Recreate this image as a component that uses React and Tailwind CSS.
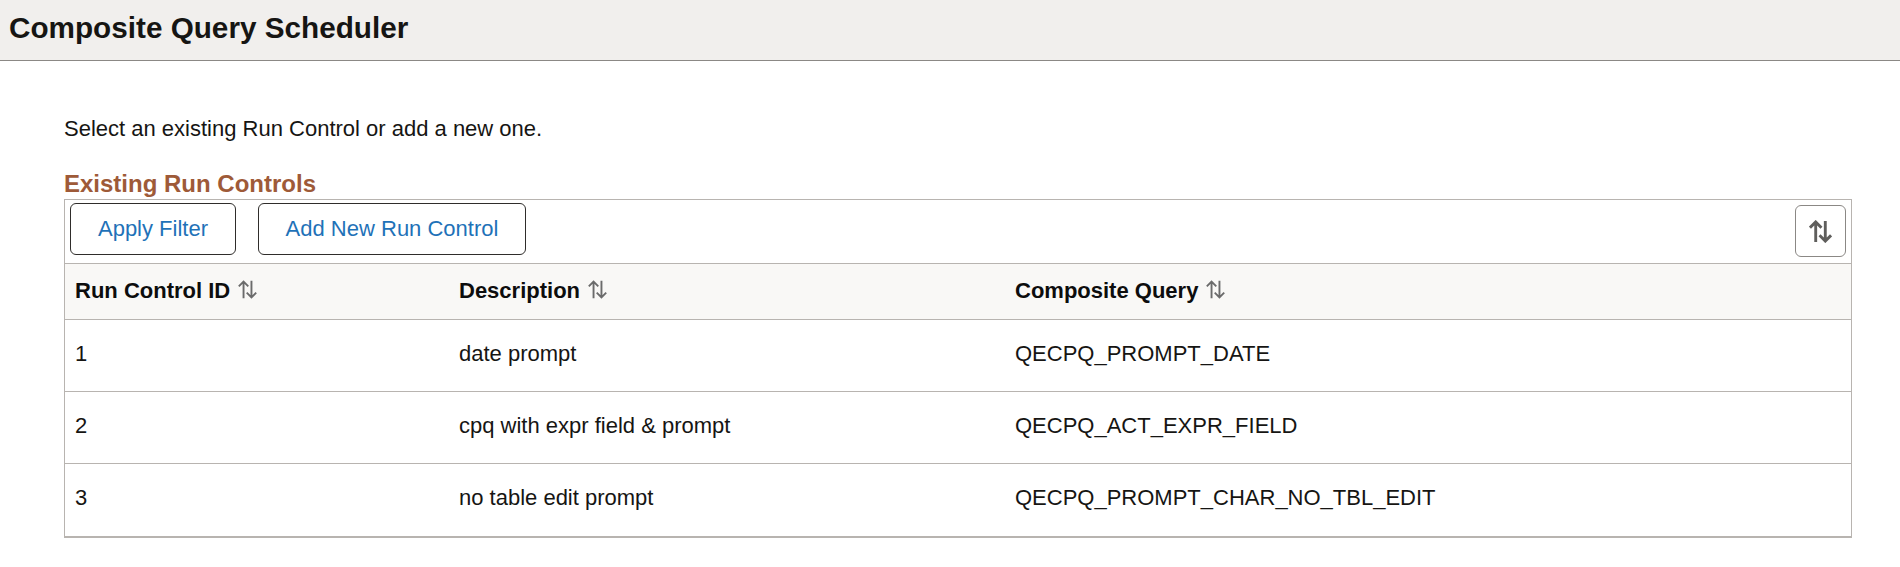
const rows = [
  { id: '1', description: 'date prompt', query: 'QECPQ_PROMPT_DATE' },
  { id: '2', description: 'cpq with expr field & prompt', query: 'QECPQ_ACT_EXPR_FIELD' },
  { id: '3', description: 'no table edit prompt', query: 'QECPQ_PROMPT_CHAR_NO_TBL_EDIT' },
];

const SortIcon = ({ className, strokeWidth = 2.4 }) => (
  <svg viewBox="0 0 24 24" fill="none" stroke="currentColor" strokeWidth={strokeWidth} className={className}>
    <path d="M7 23V2M1 8l6-6 6 6" />
    <path d="M17 1v21M11 16l6 6 6-6" />
  </svg>
);

const HeaderCell = ({ label, width }) => (
  <div className={`${width} flex items-center gap-[8px] pl-[10px] pb-[3px] text-[22px] font-bold text-[#0d0d0d]`}>
    <span>{label}</span>
    <SortIcon className="w-[19px] h-[19px] text-[#6b6b6b] -mt-[2px]" />
  </div>
);

const App = () => {
  return (
    <div className="h-[567px] bg-white font-['Liberation_Sans',Arial,sans-serif] text-[#161513]">
      {/* Page title */}
      <div className="h-[61px] flex items-center pl-[9px] pb-[3px] bg-[#f1efed] border-b-[1.500px] border-[#8b8885]">
        <h1 className="text-[29.700px] font-bold text-[#161513]">Composite Query Scheduler</h1>
      </div>

      <div className="pl-[64px] pr-[48px]">
        <p className="mt-[55px] text-[22px] leading-[25px]">Select an existing Run Control or add a new one.</p>
        <h2 className="mt-[29px] text-[24px] leading-[27px] font-bold text-[#9e5a38]">Existing Run Controls</h2>

        {/* Grid */}
        <div className="mt-[2px] border border-b-2 border-[#b8b4b0]">
          <div className="h-[63px] flex items-start pt-[3px] pl-[5px] pr-[5px]">
            <button className="w-[166px] h-[52px] pb-[2px] border border-[#2f2d2b] rounded-md text-[22px] text-[#1f72b8]">Apply Filter</button>
            <button className="ml-[22px] w-[268px] h-[52px] pb-[2px] border border-[#2f2d2b] rounded-md text-[22px] text-[#1f72b8]">Add New Run Control</button>
            <button className="ml-auto mt-[2px] w-[51px] h-[52px] flex items-center justify-center border border-[#8b8885] rounded-md">
              <SortIcon strokeWidth={3} className="w-[23px] h-[23px] text-[#5f5e5c]" />
            </button>
          </div>

          <div className="h-[57px] flex bg-[#f9f8f6] border-y border-[#b8b4b0]">
            <HeaderCell label="Run Control ID" width="w-[384px]" />
            <HeaderCell label="Description" width="w-[556px]" />
            <HeaderCell label="Composite Query" width="flex-1" />
          </div>

          {rows.map((row, i) => (
            <div key={row.id} className={`h-[72px] pb-[5px] flex items-center text-[22px] ${i < rows.length - 1 ? 'border-b border-[#b8b4b0]' : ''}`}>
              <div className="w-[384px] pl-[10px]">{row.id}</div>
              <div className="w-[556px] pl-[10px]">{row.description}</div>
              <div className="flex-1 pl-[10px]">{row.query}</div>
            </div>
          ))}
        </div>
      </div>
    </div>
  );
};

export default App;
